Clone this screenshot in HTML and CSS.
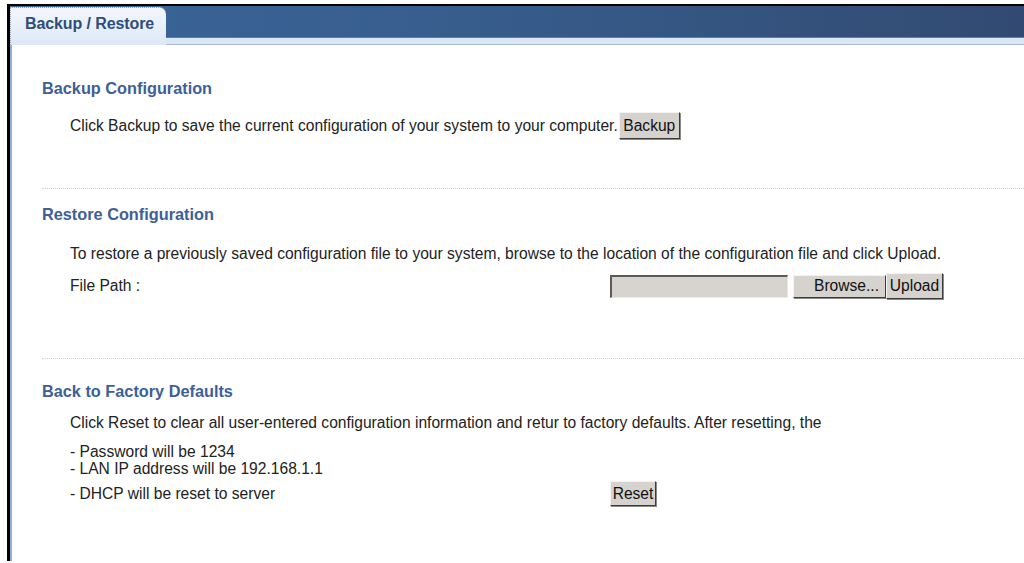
FILE: index.html
```html
<!DOCTYPE html>
<html lang="en">
<head>
<meta charset="utf-8">
<title>Backup / Restore</title>
<link rel="stylesheet" href="styles.css">
</head>
<body>
<div class="frame">
  <div class="tabbar">
    <div class="tab">Backup / Restore</div>
  </div>
  <div class="strip"></div>
  <div class="content">
    <section class="sec sec-backup">
      <h2 class="title">Backup Configuration</h2>
      <div class="row row-backup">
        <span class="txt">Click Backup to save the current configuration of your system to your computer.</span>
        <button class="btn btn-backup">Backup</button>
      </div>
    </section>
    <hr class="sep">
    <section class="sec sec-restore">
      <h2 class="title">Restore Configuration</h2>
      <p class="txt para">To restore a previously saved configuration file to your system, browse to the location of the configuration file and click Upload.</p>
      <div class="row row-file">
        <span class="txt label">File Path :</span>
        <span class="file-input"></span>
        <button class="btn btn-browse">Browse...</button>
        <button class="btn btn-upload">Upload</button>
      </div>
    </section>
    <hr class="sep">
    <section class="sec sec-reset">
      <h2 class="title">Back to Factory Defaults</h2>
      <p class="txt para">Click Reset to clear all user-entered configuration information and retur to factory defaults. After resetting, the</p>
      <ul class="list">
        <li class="txt">- Password will be 1234</li>
        <li class="txt">- LAN IP address will be 192.168.1.1</li>
      </ul>
      <div class="row row-reset">
        <span class="txt label">- DHCP will be reset to server</span>
        <button class="btn btn-reset">Reset</button>
      </div>
    </section>
  </div>
</div>
</body>
</html>
```

FILE: styles.css
```css
html, body {
  margin: 0;
  padding: 0;
  background: #ffffff;
  height: 100%;
  overflow: hidden;
}

body {
  font-family: "Liberation Sans", Arial, sans-serif;
  color: #222222;
}

.frame {
  margin: 4px 0 0 7px;
  border-top: 2px solid #000000;
  border-left: 3px solid #000000;
  height: calc(100vh - 6px);
  box-sizing: border-box;
  box-shadow: inset 2px 0 0 #8fb0de;
}

/* dark blue header with the single tab */
.tabbar {
  height: 31px;
  background: linear-gradient(to right, #3b6699 0%, #375d8d 45%, #324a71 100%);
  border-bottom: 1px solid #5d7ea6;
  position: relative;
}

.tab {
  position: absolute;
  left: 0;
  top: 1px;
  width: 156px;
  height: 38px;
  box-sizing: border-box;
  padding: 7px 0 0 14px;
  background: linear-gradient(to bottom, #f3f7fc 0%, #e6eef8 60%, #dde8f6 100%);
  border-left: 1px dotted #9aa6b6;
  border-top: 1px dotted #9aa6b6;
  border-top-right-radius: 7px;
  font-weight: bold;
  font-size: 16px;
  letter-spacing: -0.1px;
  color: #304d7c;
  z-index: 2;
}

.strip {
  height: 6px;
  background: #dae7f7;
  border-bottom: 1px solid #aabcd4;
}

.content {
  padding: 0 0 0 32px;
}

.sec {
  margin: 0;
}

.title {
  margin: 0;
  font-size: 16.3px;
  line-height: 18px;
  font-weight: bold;
  color: #3c6097;
}

.sec-backup .title { margin-top: 34px; }
.sec-restore .title { margin-top: 16px; }
.sec-reset .title { margin-top: 23px; }

.txt {
  font-size: 15.6px;
  line-height: 18px;
  color: #222222;
}

.row {
  display: flex;
  align-items: center;
  padding-left: 28px;
}

.row-backup {
  margin-top: 15px;
  margin-bottom: 49px;
  gap: 1px;
}

.para {
  margin: 22px 0 0;
  padding-left: 28px;
  white-space: nowrap;
}

.sec-reset .para { margin-top: 14px; }

.row-file {
  margin-top: 10px;
  margin-bottom: 59px;
}

.row-file .label,
.row-reset .label {
  width: 540px;
  flex: none;
}

.sep {
  margin: 0;
  height: 0;
  border: 0;
  border-top: 1px dotted #cfcfcf;
}

.btn {
  font-family: "Liberation Sans", Arial, sans-serif;
  font-size: 15.6px;
  color: #111111;
  background: #d6d3ce;
  border: 1px solid;
  border-color: #f4f3f1 #3c3c3c #3c3c3c #f4f3f1;
  padding: 0 2px;
  margin: 0;
  box-shadow: 1px 1px 0 #8a8a8a;
}

.btn-backup {
  height: 27px;
  width: 61px;
  padding: 0;
}

.file-input {
  width: 178px;
  height: 23px;
  box-sizing: border-box;
  background: #d7d4cf;
  border-top: 2px solid #5a5a5a;
  border-left: 2px solid #5a5a5a;
  border-right: 1px solid #e8e8e8;
  border-bottom: 1px solid #e8e8e8;
  flex: none;
}

.btn-browse {
  width: 93px;
  height: 23px;
  margin-left: 5px;
  text-align: right;
  padding-right: 6px;
}

.btn-upload {
  width: 57px;
  height: 26px;
  padding: 0;
}

.list {
  list-style: none;
  margin: 11px 0 0;
  padding: 0 0 0 28px;
}

.list li {
  line-height: 17px;
}

.row-reset {
  margin-top: 4px;
}

.btn-reset {
  height: 25px;
  width: 46px;
  padding: 0;
}
```
